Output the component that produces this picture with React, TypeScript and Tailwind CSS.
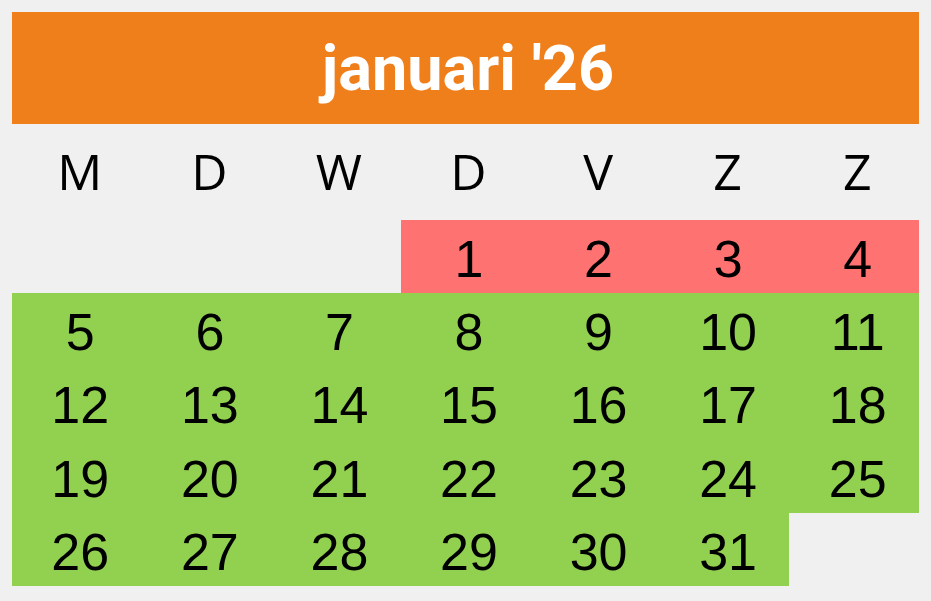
import React from "react";

const days = ["M", "D", "W", "D", "V", "Z", "Z"];

type Cell = { n: number | null; c: string };

const cells: Cell[] = [];
for (let i = 0; i < 3; i++) cells.push({ n: null, c: "" });
for (let d = 1; d <= 31; d++) cells.push({ n: d, c: d <= 4 ? "bg-[#ff7272]" : "bg-[#92d050]" });
cells.push({ n: null, c: "" });

export default function App() {
  return (
    <div className="w-[931px] h-[601px] bg-[#f0f0f0] p-[12px]">
      <div className="w-[907px]">
        <div className="h-[112px] bg-[#ef7f1b] flex items-center justify-center pl-[5px]">
          <span
            className="text-white font-bold text-[63px] leading-none"
            style={{ fontFamily: "Roboto, sans-serif" }}
          >
            januari '26
          </span>
        </div>
        <div
          className="grid grid-cols-7 h-[96px] items-center"
          style={{ fontFamily: "'Open Sans', sans-serif" }}
        >
          {days.map((d, i) => (
            <div key={i} className="text-center text-[50px] leading-none text-black pb-[3px] pl-[6px]">
              {d}
            </div>
          ))}
        </div>
        <div
          className="grid grid-cols-7 auto-rows-[73.2px]"
          style={{ fontFamily: "'Liberation Sans', Arial, sans-serif" }}
        >
          {cells.map((c, i) => (
            <div
              key={i}
              className={`${c.c} flex items-center justify-center text-[52px] leading-none text-black pt-[5px] pl-[7px]`}
            >
              {c.n ?? ""}
            </div>
          ))}
        </div>
      </div>
    </div>
  );
}
